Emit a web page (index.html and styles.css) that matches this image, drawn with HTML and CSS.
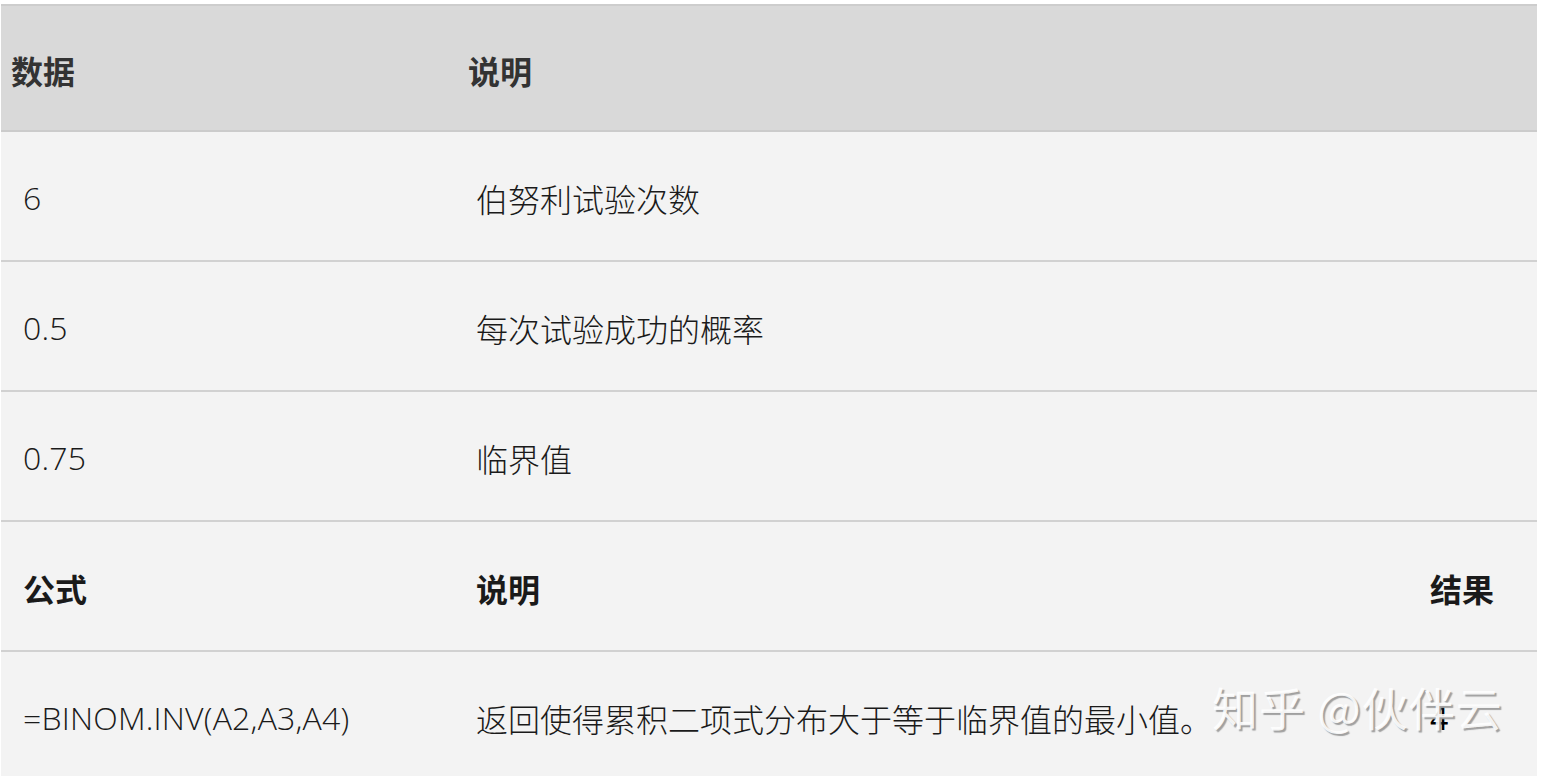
FILE: index.html
```html
<!DOCTYPE html>
<html lang="zh-CN">
<head>
<meta charset="utf-8">
<title>BINOM.INV</title>
<link rel="stylesheet" href="styles.css">
</head>
<body>
<div class="page">
  <div class="table">
    <div class="row head">
      <div class="cell c1">数据</div>
      <div class="cell c2">说明</div>
      <div class="cell c3"></div>
    </div>
    <div class="row">
      <div class="cell c1 num">6</div>
      <div class="cell c2">伯努利试验次数</div>
      <div class="cell c3"></div>
    </div>
    <div class="row">
      <div class="cell c1 num">0.5</div>
      <div class="cell c2">每次试验成功的概率</div>
      <div class="cell c3"></div>
    </div>
    <div class="row">
      <div class="cell c1 num">0.75</div>
      <div class="cell c2">临界值</div>
      <div class="cell c3"></div>
    </div>
    <div class="row strong">
      <div class="cell c1">公式</div>
      <div class="cell c2">说明</div>
      <div class="cell c3">结果</div>
    </div>
    <div class="row">
      <div class="cell c1 num">=BINOM.INV(A2,A3,A4)</div>
      <div class="cell c2">返回使得累积二项式分布大于等于临界值的最小值。</div>
      <div class="cell c3 num result">4</div>
    </div>
  </div>
  <div class="watermark">知乎 @伙伴云</div>
</div>
</body>
</html>
```
FILE: styles.css
```css
html, body {
  margin: 0;
  padding: 0;
  background: #ffffff;
}

.page {
  position: relative;
  height: 776px;
  overflow: hidden;
  padding: 4px 0 0 1px;
  box-sizing: border-box;
  font-family: "Open Sans", "Noto Sans CJK SC", sans-serif;
  font-size: 32px;
  font-weight: 300;
  color: #1a1a1a;
}

.table {
  width: 1536px;
  display: flex;
  flex-direction: column;
}

.row {
  display: grid;
  grid-template-columns: 453px 954px 129px;
  height: 130px;
  box-sizing: border-box;
  background: #f3f3f3;
  border-bottom: 2px solid #d1d1d1;
}

.cell {
  display: flex;
  align-items: center;
  padding-left: 22px;
  padding-top: 3px;
  white-space: nowrap;
}

.num {
  letter-spacing: 0.2px;
}

.result {
  font-weight: 400;
  color: #000000;
}

.head {
  height: 128px;
  background: #d9d9d9;
  border-top: 2px solid #cdcdcd;
  border-bottom: 2px solid #cbcbcb;
  font-weight: 700;
  color: #333333;
}

.head .c1 {
  padding-left: 10px;
}

.head .c2 {
  padding-left: 14px;
}

.strong {
  font-weight: 700;
  color: #1a1a1a;
}

.watermark {
  position: absolute;
  left: 1212px;
  top: 683px;
  font-family: "Noto Sans CJK SC", sans-serif;
  font-size: 46px;
  line-height: 1;
  font-weight: 400;
  letter-spacing: 1px;
  color: rgba(255, 255, 255, 0.9);
  text-shadow: 2px 2px 1px #a0a0a0;
  white-space: nowrap;
}
```
